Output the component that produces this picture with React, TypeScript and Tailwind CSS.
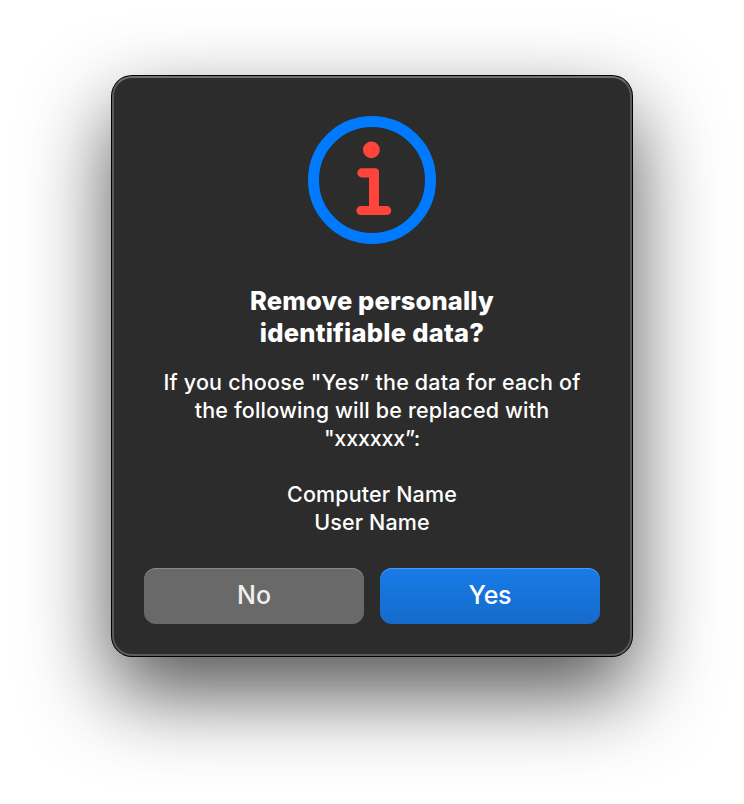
import React from "react";

function InfoIcon() {
  return (
    <svg width="128" height="128" viewBox="0 0 128 128" className="block shrink-0">
      <circle cx="64" cy="64" r="58.5" fill="none" stroke="#007aff" strokeWidth="11" />
      <circle cx="63.4" cy="33.9" r="8.4" fill="#ff453a" />
      <path
        fill="#ff453a"
        d="M53.8 52.3H67a4 4 0 0 1 4 4V90.1h7.8a4.45 4.45 0 0 1 0 8.9H52.8a4.45 4.45 0 0 1 0-8.9H61V61.4H53.8a4.55 4.55 0 0 1 0-9.1Z"
      />
    </svg>
  );
}

export default function App() {
  return (
    <main className="flex h-[804px] w-[744px] items-start justify-center overflow-hidden bg-white pt-[76px] font-['Inter','Liberation_Sans',sans-serif] text-white antialiased">
      <section
        role="dialog"
        className="flex h-[580px] w-[520px] flex-col items-center rounded-[20px] border-2 border-[#5b5b5b] border-t-[#707070] bg-[#2c2c2c] px-[30px] pt-[38px] text-center shadow-[0_0_0_1px_#000,0_36px_84px_rgba(0,0,0,0.69)]"
      >
        <InfoIcon />
        <h1 className="mt-[41px] flex flex-col items-center whitespace-nowrap text-[25.5px] font-extrabold leading-8">
          <span className="tracking-[0.14px]">Remove personally</span>
          <span className="tracking-[0.24px]">identifiable data?</span>
        </h1>
        <p className="mt-[19px] flex flex-col items-center whitespace-nowrap text-[21.5px] font-medium leading-7 tracking-[0.18px]">
          <span>If you choose "Yes” the data for each of</span>
          <span>the following will be replaced with</span>
          <span className="tracking-[-0.2px]">"xxxxxx”:</span>
        </p>
        <p className="mt-7 flex flex-col items-center whitespace-nowrap text-[21.5px] font-medium leading-7 tracking-[0.15px]">
          <span>Computer Name</span>
          <span>User Name</span>
        </p>
        <div className="mt-8 flex w-[456px] gap-4">
          <button className="h-14 w-[220px] rounded-xl bg-[#696969] pb-px text-[25px] font-[450] text-[#f0f0f0] shadow-[inset_0_1px_0_#8a8a8a]">
            No
          </button>
          <button className="h-14 w-[220px] rounded-xl bg-gradient-to-b from-[#187be8] to-[#166bca] pb-px text-[25px] font-medium tracking-[-0.2px] text-white shadow-[inset_0_1px_0_#4d9af0]">
            Yes
          </button>
        </div>
      </section>
    </main>
  );
}
